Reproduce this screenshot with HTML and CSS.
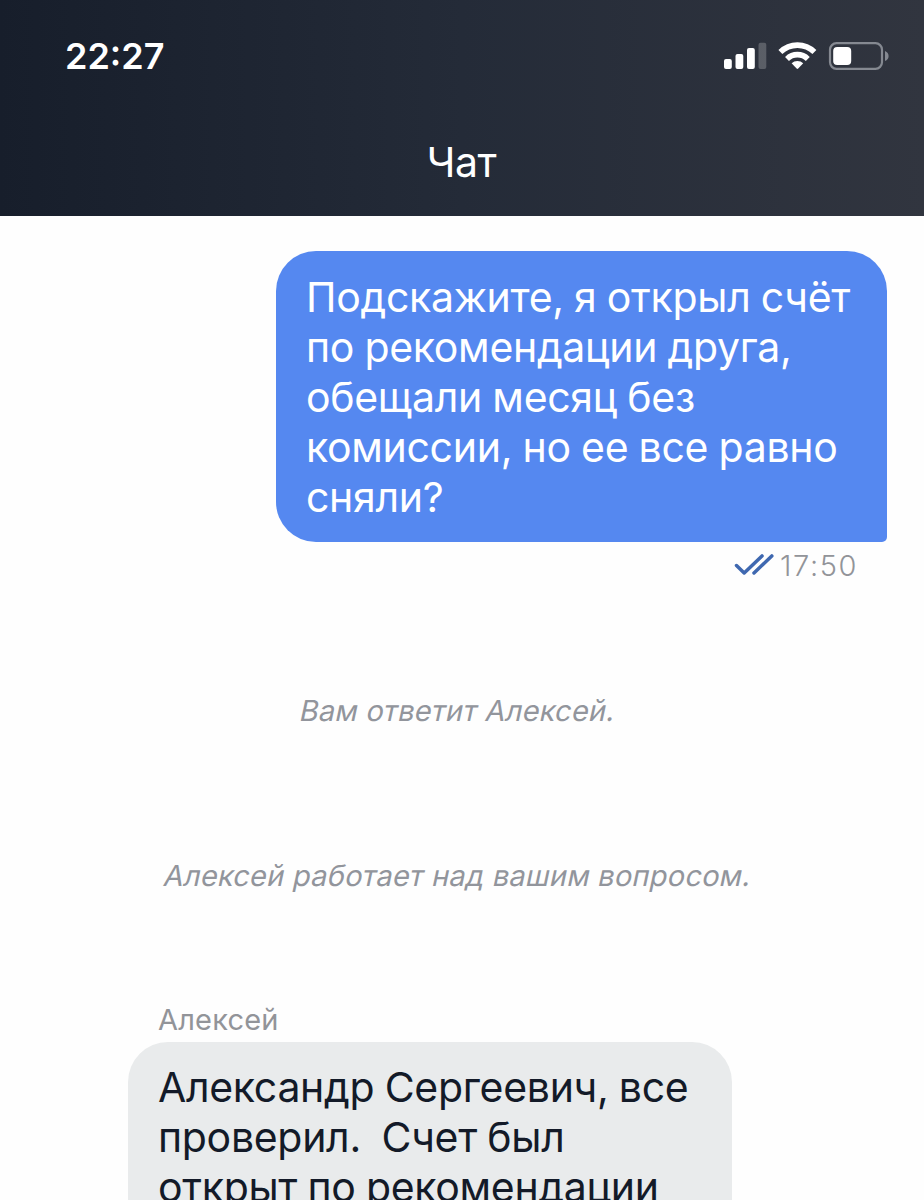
FILE: index.html
```html
<!DOCTYPE html>
<html lang="ru">
<head>
    <meta charset="UTF-8">
    <title>Чат</title>
    <link rel="stylesheet" href="styles.css">
</head>
<body>
    <header class="header">
        <div class="status-bar">
            <span class="clock">22:27</span>
            <svg class="status-icons" width="166" height="30" viewBox="0 0 166 30">
                <!-- сигнал -->
                <g fill="#fff">
                    <rect x="0" y="18" width="7.8" height="10" rx="2"/>
                    <rect x="11.5" y="13" width="7.8" height="15" rx="2"/>
                    <rect x="23" y="7" width="7.8" height="21" rx="2"/>
                    <rect x="34.5" y="1.7" width="7.8" height="26.3" rx="2" opacity="0.22"/>
                </g>
                <!-- wi-fi -->
                <g fill="none" stroke="#fff" stroke-width="5.6">
                    <path d="M56.4 11.1 A24.2 24.2 0 0 1 90.4 11.1"/>
                    <path d="M63 17.9 A14.9 14.9 0 0 1 83.8 17.9"/>
                </g>
                <path d="M67.6 22.3 A8.2 8.2 0 0 1 79.2 22.3 L74.2 27.6 Q73.4 28.4 72.6 27.6 Z" fill="#fff"/>
                <!-- батарея -->
                <rect x="106" y="2.2" width="52" height="25.6" rx="6.5" fill="none" stroke="#858991" stroke-width="2.2"/>
                <rect x="109.2" y="6" width="18" height="18" rx="4" fill="#fff"/>
                <path d="M161 10 Q164.6 11.5 164.6 15 Q164.6 18.5 161 20 Z" fill="#858991"/>
            </svg>
        </div>
        <h1 class="title">Чат</h1>
    </header>

    <main class="chat">
        <div class="bubble outgoing">Подскажите, я открыл счёт<br>по рекомендации друга,<br>обещали месяц без<br>комиссии, но ее все равно<br>сняли?</div>
        <div class="meta">
            <svg class="checks" width="40" height="22" viewBox="0 0 40 22" fill="none" stroke="#3f68b0" stroke-width="3.5" stroke-linecap="round" stroke-linejoin="round">
                <path d="M2.5 11.5 L10.2 19 L28 1.9"/>
                <path d="M20 19 L37.8 1.9"/>
            </svg>
            <span class="time">17:50</span>
        </div>

        <p class="notice joined">Вам ответит Алексей.</p>
        <p class="notice working">Алексей работает над вашим вопросом.</p>

        <div class="author">Алексей</div>
        <div class="bubble incoming">Александр Сергеевич, все<br>проверил.&nbsp; Счет был<br>открыт по рекомендации</div>
    </main>
</body>
</html>
```
FILE: styles.css
```css
body {
    margin: 0;
    height: 1200px;
    overflow: hidden;
    display: flex;
    flex-direction: column;
    font-family: Inter, "Liberation Sans", sans-serif;
    background-color: #fefefe;
}
.header {
    flex: none;
    height: 216px;
    background: linear-gradient(90deg, #171e2b, #242b38 50%, #31353f);
    color: #fff;
}
.status-bar {
    display: flex;
    justify-content: space-between;
    align-items: flex-start;
    height: 137px;
    padding: 41px 34px 0 65px;
    box-sizing: border-box;
}
.clock {
    font-size: 36px;
    line-height: 30px;
    font-weight: 600;
}
.status-icons {
    display: block;
}
.title {
    margin: 0;
    padding-right: 1px;
    font-size: 41px;
    line-height: 50px;
    font-weight: 400;
    letter-spacing: -0.5px;
    text-align: center;
}
.chat {
    flex: 1;
    min-height: 0;
    display: flex;
    flex-direction: column;
    padding-top: 35px;
}
.bubble {
    box-sizing: border-box;
    font-size: 41px;
    line-height: 50px;
    letter-spacing: -0.3px;
    word-spacing: -0.9px;
    white-space: nowrap;
}
.outgoing {
    flex: none;
    align-self: flex-end;
    width: 611px;
    height: 291px;
    margin-right: 37px;
    padding: 21px 30px 20px;
    border-radius: 40px 40px 5px 40px;
    background-color: #5588f0;
    color: #fff;
}
.meta {
    display: flex;
    justify-content: flex-end;
    align-items: center;
    gap: 6px;
    height: 46px;
    padding-right: 66px;
    color: #929499;
    font-size: 29px;
}
.time {
    font-weight: 300;
    letter-spacing: 1.6px;
}
.notice {
    margin: 0;
    padding-right: 8px;
    line-height: 36px;
    font-size: 29px;
    letter-spacing: 0.22px;
    text-align: center;
    color: #92959c;
    transform: skewX(-12deg);
}
.joined {
    margin-top: 105px;
}
.working {
    margin-top: 129px;
}
.author {
    margin: 108px 0 4px 158px;
    font-size: 29px;
    line-height: 36px;
    letter-spacing: 0.2px;
    color: #929499;
}
.incoming {
    flex: 1;
    min-height: 0;
    overflow: hidden;
    width: 604px;
    margin-left: 128px;
    padding: 20px 30px 0;
    border-radius: 40px 40px 0 0;
    background-color: #e9ebec;
    color: #131a28;
}
```
